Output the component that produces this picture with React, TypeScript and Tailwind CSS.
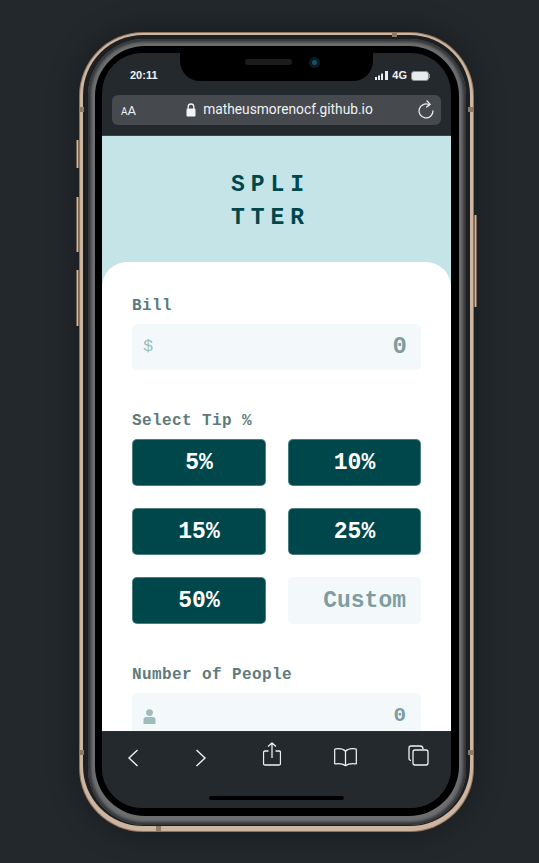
import React from "react";

const mono = "font-['Liberation_Mono',monospace]";

function Tip({ label }: { label: string }) {
  return (
    <div className={`h-[47px] rounded-[5px] bg-[#00474b] border border-[#7fa3a5]/60 flex items-center justify-center pt-[2px] text-white text-[23px] font-bold ${mono}`}>
      {label}
    </div>
  );
}

function Mark({ cls }: { cls: string }) {
  return <div className={`absolute w-[5px] h-[5px] bg-[#8f7a66] ${cls}`} />;
}

function SideBtn({ cls }: { cls: string }) {
  return <div className={`absolute w-[3px] rounded-[1px] bg-[#d2b9a2] border-x border-[#7d6856] ${cls}`} />;
}

export default function App() {
  return (
    <div className="w-[539px] h-[863px] bg-[#23282c] flex justify-start items-start overflow-hidden pl-[79px] pt-[32px]">
      <div className="relative w-[395px] h-[800px]">
        <SideBtn cls="-left-[3px] top-[108px] h-[28px]" />
        <SideBtn cls="-left-[3px] top-[165px] h-[55px]" />
        <SideBtn cls="-left-[3px] top-[238px] h-[56px]" />
        <SideBtn cls="-right-[3px] top-[183px] h-[92px]" />

        {/* gold band */}
        <div className="w-full h-full rounded-[64px] bg-[#8d7461] p-[1px] shadow-[0_0_30px_rgba(0,0,0,0.35)]">
          <div className="w-full h-full rounded-[63px] bg-[#cdb59f] pt-[2px] px-[3px] pb-[5px]">
            {/* dark gap */}
            <div className="w-full h-full rounded-[60px] bg-[#1d2023] pt-[4px] pb-[1px] pl-[5px] pr-[4px]">
              {/* steel band */}
              <div className="w-full h-full rounded-[56px] bg-[#6d6e70] pt-[7px] pb-[9px] px-[7px] shadow-[inset_0_0_3px_3px_#333436]">
                {/* black bezel */}
                <div className="w-full h-full rounded-[50px] bg-black p-[7px]">
                  {/* screen */}
                  <div className="relative w-[349px] h-[755px] rounded-[40px] overflow-hidden flex flex-col bg-[#24292d]">
                    {/* notch */}
                    <div className="absolute left-[78px] top-0 w-[193px] h-[28px] bg-black rounded-b-[20px] flex items-center justify-center gap-[17px] pb-[10px] pl-[12px]">
                      <div className="w-[47px] h-[6px] rounded-full bg-[#1b1c1d]" />
                      <div className="w-[11px] h-[11px] rounded-full bg-[#0c1a22] flex items-center justify-center">
                        <div className="w-[5px] h-[5px] rounded-full bg-[#17506a]" />
                      </div>
                    </div>

                    {/* status bar */}
                    <div className="h-[42px] shrink-0 flex items-end justify-between pl-[28px] pr-[21px] pb-[13px] text-[#eef3f5] font-['Liberation_Sans',sans-serif]">
                      <span className="text-[11px] font-bold leading-[13px]">20:11</span>
                      <div className="flex items-center gap-[4px]">
                        <svg width="13" height="9" viewBox="0 0 13 9" fill="#e6ecef">
                          <rect x="0" y="6" width="2" height="3" />
                          <rect x="3" y="4.5" width="2" height="4.5" />
                          <rect x="6" y="2.5" width="2" height="6.5" />
                          <rect x="10" y="0" width="3" height="9" />
                        </svg>
                        <span className="text-[11px] font-bold leading-[13px]">4G</span>
                        <svg width="19" height="10" viewBox="0 0 19 10">
                          <rect x="0.5" y="0.5" width="17" height="9" rx="2.5" fill="#e8eced" stroke="#8b8f92" />
                          <rect x="18" y="3" width="1" height="4" fill="#8b8f92" />
                        </svg>
                      </div>
                    </div>

                    {/* url bar */}
                    <div className="h-[30px] mx-[10px] shrink-0 rounded-[6px] bg-[#46494e] flex items-center justify-between pl-[9px] pr-[6px] text-[#eef2f4] font-['Roboto',sans-serif]">
                      <span className="leading-none"><span className="text-[10px]">A</span><span className="text-[13px]">A</span></span>
                      <div className="flex items-center gap-[7px] pl-[6px]">
                        <svg width="10" height="14" viewBox="0 0 10 14" fill="none">
                          <path d="M2.2 6V3.8a2.8 2.8 0 0 1 5.6 0V6" stroke="#f2f4f5" strokeWidth="1.3" />
                          <rect x="0.5" y="5.5" width="9" height="8" rx="1.2" fill="#f2f4f5" />
                        </svg>
                        <span className="text-[13.75px] leading-none">matheusmorenocf.github.io</span>
                      </div>
                      <svg width="18" height="20" viewBox="0 0 18 20" fill="none" stroke="#e8ecee" strokeWidth="1.3" strokeLinecap="round">
                        <path d="M12 4.6A7 7 0 1 0 16 10.8" />
                        <path d="M10 1l3.2 3.4L9.6 7" strokeLinejoin="round" />
                      </svg>
                    </div>
                    <div className="h-[11px] shrink-0 border-b border-[#3e4347]" />

                    {/* page */}
                    <div className="flex-1 min-h-0 overflow-hidden bg-[#c5e4e7] flex flex-col">
                      <div className={`h-[126px] shrink-0 flex flex-col items-center pt-[33px] pr-[12px] text-[#00474b] text-[23px] font-bold leading-[33px] tracking-[6px] ${mono}`}>
                        <span>SPLI</span>
                        <span>TTER</span>
                      </div>
                      <div className="flex-1 min-h-0 rounded-t-[25px] bg-white px-[30px] pt-[35px]">
                        <div className={`text-[16px] font-bold leading-[18px] text-[#5e7a7d] ${mono} tracking-[0.4px]`}>Bill</div>
                        <div className="mt-[9px] h-[46px] rounded-[5px] bg-[#f3f9fa] flex items-center justify-between pl-[11px] pr-[14px]">
                          <span className={`text-[17px] text-[#9ebbbd] ${mono}`}>$</span>
                          <span className={`text-[24px] font-bold text-[#7f9d9f] ${mono}`}>0</span>
                        </div>

                        <div className={`mt-[42px] text-[16px] font-bold leading-[18px] text-[#5e7a7d] ${mono} tracking-[0.4px]`}>Select Tip %</div>
                        <div className="mt-[9px] grid grid-cols-[134px_133px] gap-x-[22px] gap-y-[22px]">
                          <Tip label="5%" />
                          <Tip label="10%" />
                          <Tip label="15%" />
                          <Tip label="25%" />
                          <Tip label="50%" />
                          <div className={`h-[47px] rounded-[5px] bg-[#f3f9fa] flex items-center justify-end pt-[2px] pr-[15px] text-[23px] font-bold text-[#7f9d9f] ${mono}`}>
                            Custom
                          </div>
                        </div>

                        <div className={`mt-[42px] text-[16px] font-bold leading-[18px] text-[#5e7a7d] ${mono} tracking-[0.4px]`}>Number of People</div>
                        <div className="mt-[9px] h-[46px] rounded-[5px] bg-[#f3f9fa] flex items-center justify-between pl-[11px] pr-[15px]">
                          <svg width="13" height="15" viewBox="0 0 13 15" fill="#9ebbbd">
                            <circle cx="6.5" cy="3.6" r="3.4" />
                            <path d="M0.5 15V10.5A2.5 2.5 0 0 1 3 8h7a2.5 2.5 0 0 1 2.5 2.5V15z" />
                          </svg>
                          <span className={`text-[21px] font-bold text-[#7f9d9f] ${mono}`}>0</span>
                        </div>
                      </div>
                    </div>

                    {/* safari toolbar */}
                    <div className="h-[77px] shrink-0 bg-[#24292d] flex flex-col border-t border-[#2c3135]">
                      <div className="h-[47px] flex items-center pl-[25px] pt-[4px]">
                        <svg width="12" height="18" viewBox="0 0 12 18" fill="none" stroke="#eef2f3" strokeWidth="1.4"><path d="M10.5 1L2 9l8.5 8" /></svg>
                        <svg className="ml-[56px]" width="12" height="18" viewBox="0 0 12 18" fill="none" stroke="#eef2f3" strokeWidth="1.4"><path d="M1.5 1L10 9l-8.5 8" /></svg>
                        <svg className="-mt-[8px] ml-[56px]" width="18" height="24" viewBox="0 0 18 24" fill="none" stroke="#eef2f3" strokeWidth="1.3" strokeLinejoin="round">
                          <path d="M5.5 9H2a1.5 1.5 0 0 0-1.5 1.5v11A1.5 1.5 0 0 0 2 23h14a1.5 1.5 0 0 0 1.5-1.5v-11A1.5 1.5 0 0 0 16 9h-3.5" />
                          <path d="M9 16V1M5 4.6L9 1l4 3.6" />
                        </svg>
                        <svg className="ml-[53px] -mt-[2px]" width="23" height="20" viewBox="0 0 24 20" fill="none" stroke="#eef2f3" strokeWidth="1.3" strokeLinejoin="round">
                          <path d="M12 4C10 1.8 6 1 1.5 1.6c-.5 0-.8.4-.8.9v14.6c1 .5 6.5-1.4 11.3 1.9 4.8-3.3 10.3-1.4 11.3-1.9V2.5c0-.5-.3-.9-.8-.9C18 1 14 1.8 12 4zM12 4v14.8" />
                        </svg>
                        <svg className="ml-[51px] -mt-[5px]" width="21" height="21" viewBox="0 0 21 21" fill="none" stroke="#eef2f3" strokeWidth="1.3">
                          <path d="M2.8 15.5H3A2 2 0 0 1 1 13.5V3a2 2 0 0 1 2-2h9a3 3 0 0 1 3 3" />
                          <rect x="5" y="5" width="15" height="15" rx="2" />
                        </svg>
                      </div>
                      <div className="mt-[17px] mx-auto w-[135px] h-[4px] rounded-full bg-black" />
                    </div>
                  </div>
                </div>
              </div>
            </div>
          </div>
        </div>

        <Mark cls="left-[0px] top-[75px]" />
        <Mark cls="right-[1px] top-[75px]" />
        <Mark cls="left-[0px] top-[718px]" />
        <Mark cls="right-[1px] top-[718px]" />
        <Mark cls="left-[313px] top-[0px]" />
        <Mark cls="left-[77px] bottom-[1px]" />
      </div>
    </div>
  );
}
